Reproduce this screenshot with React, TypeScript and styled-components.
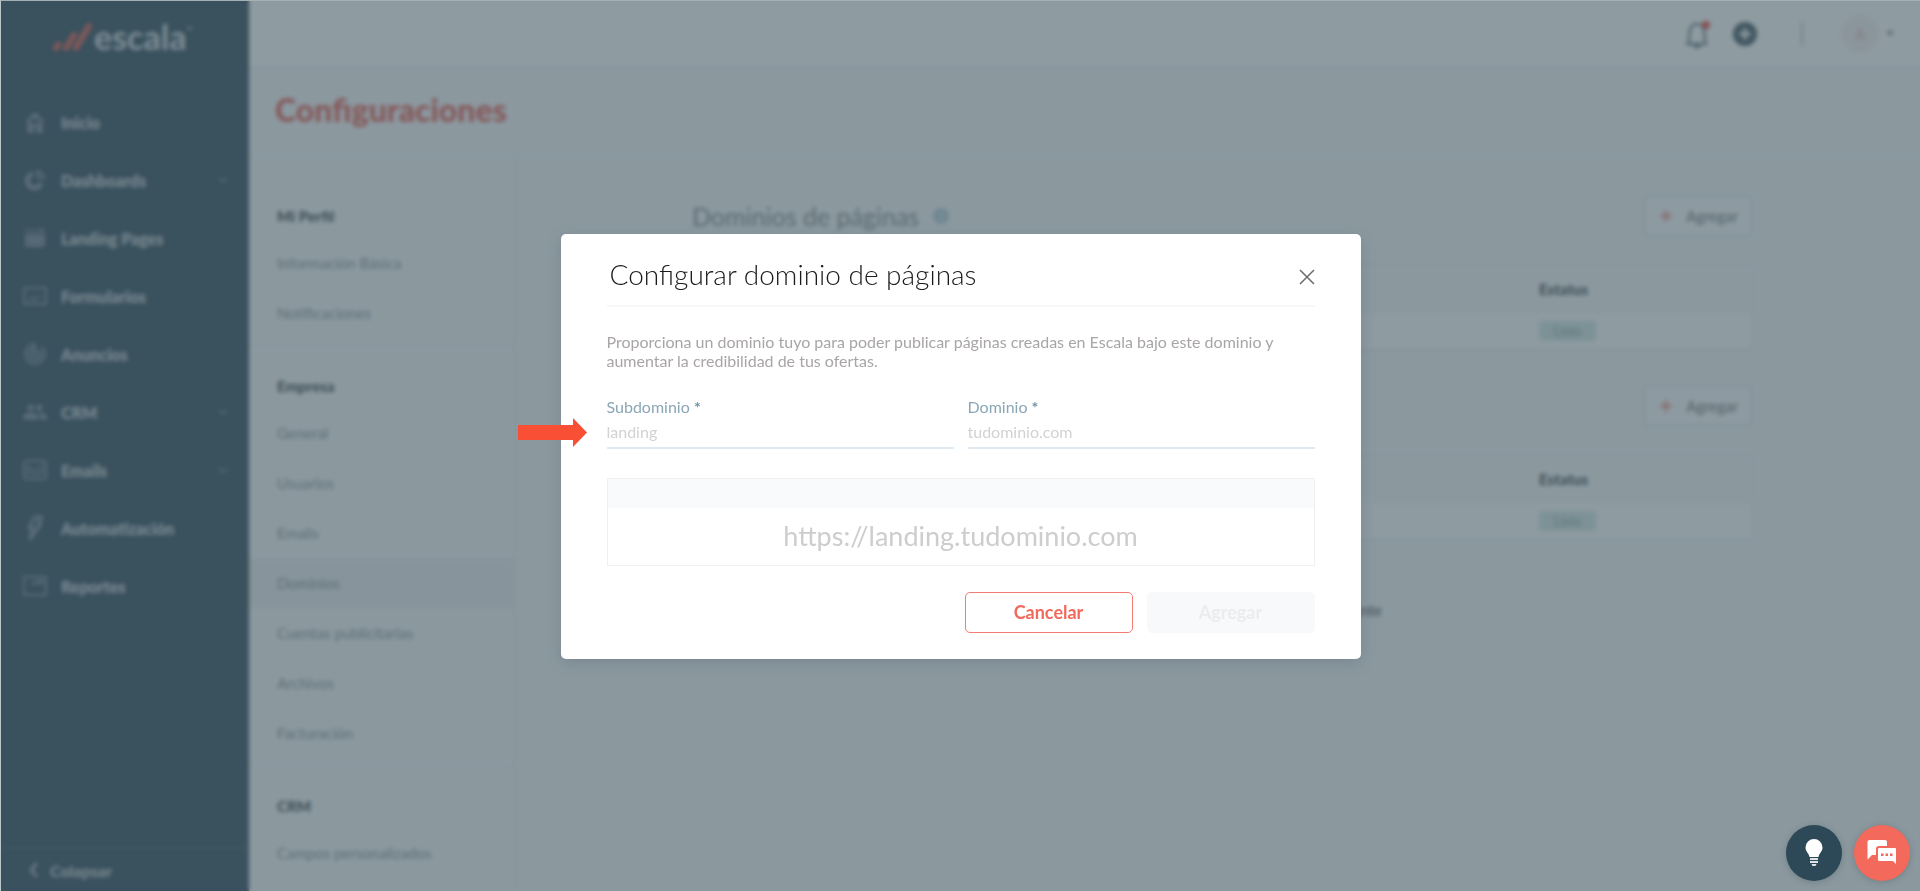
import React from "react";
import styled, { createGlobalStyle, css } from "styled-components";
import { MdGroup, MdTrackChanges } from "react-icons/md";

const GlobalStyle = createGlobalStyle`
  * { box-sizing: border-box; }
  body {
    margin: 0;
    font-family: Lato, "Open Sans", sans-serif;
    font-size: 15px;
    color: #3c3c3c;
    background: #f8f9fb;
  }
  a { color: inherit; text-decoration: none; }
  button, input { font: inherit; }
  h1, h2, h3, p, ul { margin: 0; padding: 0; font-weight: 400; }
  ul { list-style: none; }
`;

const Shell = styled.div`
  display: flex;
  min-height: 100vh;
`;

/* ---------- main sidebar ---------- */

const Sidebar = styled.aside`
  flex: 0 0 249px;
  display: flex;
  flex-direction: column;
  background: #2d4757;
  color: #cfd8dd;
`;

const Brand = styled.a`
  display: flex;
  align-items: center;
  gap: 2px;
  height: 74px;
  margin-bottom: 19px;
  padding-left: 52px;
`;

const BrandName = styled.span`
  display: flex;
  color: #d3dce1;
  font-size: 34px;
  line-height: 30px;
  font-weight: 700;

  sup {
    font-size: 8px;
    line-height: 16px;
  }
`;

const MainLink = styled.a`
  display: flex;
  align-items: center;
  height: 58px;
  padding: 0 20px 0 22px;
  font-size: 16px;
  font-weight: 900;
`;

const IconSlot = styled.span`
  display: flex;
  justify-content: center;
  width: 26px;
  margin-right: 13px;
  opacity: 0.5;
`;

const Caret = styled.svg`
  width: 12px;
  height: 12px;
  margin-left: auto;
  fill: none;
  stroke: currentColor;
  stroke-width: 2;
  opacity: 0.35;
`;

const Collapse = styled.button`
  display: flex;
  align-items: center;
  gap: 10px;
  height: 44px;
  margin-top: auto;
  padding: 0 28px;
  border: 0;
  border-top: 2px solid #3f5867;
  background: none;
  color: inherit;
  font-size: 16px;
  font-weight: 700;
`;

/* ---------- page ---------- */

const Page = styled.div`
  flex: 1;
  min-width: 0;
  display: flex;
  flex-direction: column;
`;

const TopBar = styled.header`
  display: flex;
  align-items: center;
  justify-content: flex-end;
  height: 69px;
  padding-right: 25px;
  background: #ffffff;
  border-bottom: 2px solid #e6eaee;
`;

const IconButton = styled.button<{ $gap: number }>`
  display: flex;
  align-items: center;
  margin-right: ${(p) => p.$gap}px;
  padding: 0;
  border: 0;
  background: none;
  color: #4d606a;
`;

const Separator = styled.span`
  width: 2px;
  height: 24px;
  margin-right: 38px;
  background: #c3cace;
`;

const Account = styled.button`
  display: flex;
  align-items: center;
  gap: 6px;
  padding: 0;
  border: 0;
  background: none;
  color: #7f8a90;
`;

const Avatar = styled.span`
  width: 38px;
  height: 38px;
  border-radius: 50%;
  background: #f8f0f2;
  color: #ecb6ba;
  font-size: 15px;
  line-height: 38px;
  text-align: center;
`;

const PageTitle = styled.h1`
  height: 87px;
  padding: 21px 26px 0;
  border-bottom: 1px solid #eaedf2;
  color: #e8594e;
  font-size: 32px;
  line-height: 40px;
  font-weight: 900;
`;

const Body = styled.div`
  flex: 1;
  display: flex;
`;

const SettingsNav = styled.nav`
  flex: 0 0 267px;
  padding-top: 20px;
  border-right: 2px solid #eaedf5;
`;

const Group = styled.section`
  padding: 20px 0 7px;
  border-bottom: 1px solid #e3e7f0;

  &:last-child { border-bottom: 0; }
`;

const GroupTitle = styled.h3`
  height: 42px;
  padding-left: 28px;
  color: #3c4145;
  font-size: 15px;
  line-height: 40px;
  font-weight: 900;
`;

const SettingsLink = styled.a<{ $active?: boolean }>`
  display: block;
  height: 50px;
  padding-left: 28px;
  color: #868b8f;
  font-size: 15px;
  line-height: 50px;
  ${(p) => p.$active && css`background: #edeef2;`}
`;

const Content = styled.main`
  flex: 1;
  padding: 40px 167px 0 176px;
`;

const Block = styled.section`
  margin-bottom: 35px;
`;

const BlockHead = styled.div`
  display: flex;
  align-items: center;
  gap: 14px;
  height: 40px;
  margin-bottom: 28px;
`;

const BlockTitle = styled.h2`
  color: #7b8185;
  font-size: 25px;
  line-height: 40px;
`;

const Info = styled.span`
  width: 16px;
  height: 16px;
  border-radius: 50%;
  background: #b3cddd;
  color: #ffffff;
  font-size: 11px;
  line-height: 16px;
  text-align: center;
`;

const AddButton = styled.button`
  display: flex;
  align-items: center;
  gap: 13px;
  height: 42px;
  margin-left: auto;
  padding: 0 13px 0 14px;
  border: 2px solid #dfe3ee;
  border-radius: 5px;
  background: #fdfdfe;
  color: #666b6f;
  font-size: 15px;
`;

const DomainTable = styled.table`
  width: 100%;
  border: 1px solid #e3e7ee;
  border-bottom-width: 2px;
  border-collapse: separate;
  border-spacing: 0;

  th, td {
    padding: 0;
    text-align: left;
    line-height: 20px;
  }
  thead th, thead td {
    height: 48px;
    border-bottom: 1px solid #eef0f4;
    color: #3c4145;
    font-weight: 900;
  }
  tbody td {
    height: 36px;
    background: #ffffff;
  }
  th:last-child, td:last-child {
    width: 213px;
  }
`;

const Status = styled.span`
  display: block;
  width: 57px;
  height: 20px;
  border-radius: 4px;
  background: #d4e8e6;
  color: #7d9f9d;
  font-size: 13px;
  text-align: center;
`;

const Note = styled.p`
  max-width: 690px;
  margin-top: 59px;
  line-height: 20px;
  text-align: right;
`;

/* ---------- dialog ---------- */

const Overlay = styled.div`
  position: fixed;
  inset: 0;
  display: flex;
  align-items: center;
  justify-content: center;
  border-top: 1px solid #a3b1b4;
  border-left: 1px solid #bcc7ca;
  background: rgba(67, 89, 99, 0.6);
  backdrop-filter: blur(2px);
`;

const Dialog = styled.div`
  position: relative;
  width: 800px;
  padding: 20px 46px 26px;
  border-radius: 5px;
  background: #ffffff;
  box-shadow: 0 4px 16px rgba(40, 60, 75, 0.2);
`;

const DialogHead = styled.div`
  display: flex;
  align-items: center;
  justify-content: space-between;
  height: 53px;
  padding: 0 0 5px 3px;
  border-bottom: 2px solid #f6f7f7;
`;

const DialogTitle = styled.h2`
  padding-bottom: 5px;
  font-size: 28px;
  line-height: 40px;
  font-weight: 300;
  color: #1a1a1a;
`;

const Close = styled.button`
  display: flex;
  padding: 0;
  border: 0;
  background: none;
  color: #6b6b6b;
`;

const Lead = styled.p`
  margin: 25px 0 27px;
  color: #a9a5a5;
  font-size: 16px;
  line-height: 19px;
`;

const Fields = styled.div`
  display: grid;
  grid-template-columns: 1fr 1fr;
  gap: 14px;
`;

const Field = styled.div`
  display: flex;
  flex-direction: column;

  label {
    color: #8ba7b6;
    font-size: 16px;
    line-height: 20px;
  }
  b { color: #6f93a6; }
  input {
    height: 32px;
    padding: 0;
    border: 0;
    border-bottom: 2px solid #dfeaf2;
    outline: 0;
    background: none;
    font-size: 16px;
  }
  input::placeholder { color: #d2d2d2; opacity: 1; }
`;

const Preview = styled.div`
  margin: 29px 0 26px;
  border: 1px solid #f0f0f1;
  background: #ffffff;
`;

const PreviewBar = styled.div`
  height: 29px;
  background: #f9fafc;
`;

const PreviewUrl = styled.p`
  padding-bottom: 2px;
  color: #cdcdcd;
  font-size: 27px;
  line-height: 55px;
  text-align: center;
`;

const Actions = styled.div`
  display: flex;
  justify-content: flex-end;
  gap: 14px;
`;

const ActionButton = styled.button<{ $primary?: boolean }>`
  width: 168px;
  height: 41px;
  padding-bottom: 2px;
  border: 1px solid ${(p) => (p.$primary ? "#f8f9fb" : "#f37d72")};
  border-radius: 5px;
  background: ${(p) => (p.$primary ? "#f8f9fb" : "#ffffff")};
  color: ${(p) => (p.$primary ? "#ececee" : "#f26a5d")};
  font-size: 18px;
  font-weight: 700;
`;

const Pointer = styled.svg`
  position: absolute;
  top: 184px;
  left: -43px;
  width: 69px;
  height: 29px;
`;

const Floating = styled.div`
  position: fixed;
  right: 10px;
  bottom: 10px;
  display: flex;
  gap: 12px;
`;

const Fab = styled.button<{ $color: string }>`
  display: flex;
  align-items: center;
  justify-content: center;
  width: 56px;
  height: 56px;
  padding: 0;
  border: 0;
  border-radius: 50%;
  background: ${(p) => p.$color};
  box-shadow: 0 1px 6px rgba(30, 50, 60, 0.25);
`;

/* ---------- drawings ---------- */

const Logo = () => (
  <svg width="40" height="30" viewBox="0 0 40 30" stroke="#d9594c" strokeLinecap="round" fill="none">
    <path d="M4 26 6.500 22.500" strokeWidth="6" />
    <path d="M14 26 22 13" strokeWidth="6" />
    <path d="M24 26 37 4" strokeWidth="6" />
  </svg>
);

const HomeIcon = () => (
  <svg width="18" height="22" viewBox="0 0 18 22" fill="none" stroke="currentColor" strokeWidth="3">
    <path d="M1 11l8-8 8 8M3 10v12M15 10v12M9 3v5M6 14h6M6 14v8M12 14v8" />
  </svg>
);

const PieIcon = () => (
  <svg width="22" height="22" viewBox="0 0 22 22" fill="none" stroke="currentColor" strokeWidth="5">
    <path d="M9 5a7 7 0 1 0 8 9" />
    <path d="M13 2a8 8 0 0 1 7 7l-6 0z" strokeWidth="2" />
  </svg>
);

const LandingIcon = () => (
  <svg width="20" height="20" viewBox="0 0 20 20" fill="currentColor">
    <path d="M0 1h4v3H0zM6 1h4v3H6zM12 1h8v3h-8zM0 6h20v13H0z" opacity=".85" />
  </svg>
);

const FormIcon = () => (
  <svg width="24" height="18" viewBox="0 0 24 18" fill="none" stroke="currentColor" strokeWidth="2">
    <rect x="1" y="1" width="22" height="16" />
    <path d="M5 10h14M5 13h10" opacity=".6" />
  </svg>
);

const MailIcon = () => (
  <svg width="24" height="20" viewBox="0 0 24 20" fill="none" stroke="currentColor" strokeWidth="2">
    <rect x="1" y="1" width="22" height="18" rx="3" />
    <path d="M5 6l7 5 7-5M5 14h14M5 6v8M19 6v8" opacity=".8" />
  </svg>
);

const BoltIcon = () => (
  <svg width="18" height="26" viewBox="0 0 18 26" fill="none" stroke="currentColor" strokeWidth="3" strokeLinejoin="round">
    <path d="M9 2h7l-4 7h3L4 24l3-11H3z" />
  </svg>
);

const ReportIcon = () => (
  <svg width="24" height="20" viewBox="0 0 24 20" fill="none" stroke="currentColor" strokeWidth="2">
    <path d="M1 1h22v18H1zM8 9l4-3 2 2 5-4M15 5h4v4" />
  </svg>
);

const BellIcon = () => (
  <svg width="26" height="30" viewBox="0 0 26 30" fill="none" stroke="currentColor" strokeWidth="2">
    <path d="M2 25h21M4 25c2-4 1-8 2-14 1-4 4-6 7-6s6 2 7 6c1 6 0 10 2 14M10 26c1 3 5 3 6 0" />
    <circle cx="22" cy="6" r="4" fill="#ee4438" stroke="none" />
  </svg>
);

const AddIcon = () => (
  <svg width="24" height="24" viewBox="0 0 24 24">
    <circle cx="12" cy="12" r="12" fill="#3f545f" />
    <path d="M12 6v12M6 12h12" stroke="#fff" strokeWidth="3" />
  </svg>
);

const BulbIcon = () => (
  <svg width="18" height="28" viewBox="0 0 18 28" fill="#fff">
    <path d="M9 0a8.500 8.500 0 0 0-8.500 8.500c0 4 3.500 6 4 9.500h9c.5-3.500 4-5.500 4-9.500A8.500 8.500 0 0 0 9 0z" />
    <path d="M5 19h8v2H5zM5 22h8v2H5zM6.500 25h5l-1 2h-3z" opacity=".85" />
  </svg>
);

const ChatIcon = () => (
  <svg width="30" height="28" viewBox="0 0 30 28">
    <path d="M2 1h16a2 2 0 0 1 2 2v11a2 2 0 0 1-2 2H5l-4.500 4.500V3A2 2 0 0 1 2 1z" fill="#fff" />
    <path d="M12 8h16a2 2 0 0 1 2 2v17.500L25.500 23H12a2 2 0 0 1-2-2V10a2 2 0 0 1 2-2z" fill="#fff" stroke="#f3695b" strokeWidth="2" />
    <path d="M14 14.500h2.500V17H14zM18.500 14.500H21V17h-2.500zM23 14.500h2.500V17H23z" fill="#f3695b" />
  </svg>
);

const Chevron = () => (
  <Caret viewBox="0 0 12 12"><path d="M2 4l4 4 4-4" /></Caret>
);

/* ---------- data ---------- */

const mainLinks: { label: string; icon: React.ReactNode; menu?: boolean }[] = [
  { label: "Inicio", icon: <HomeIcon /> },
  { label: "Dashboards", icon: <PieIcon />, menu: true },
  { label: "Landing Pages", icon: <LandingIcon /> },
  { label: "Formularios", icon: <FormIcon /> },
  { label: "Anuncios", icon: <MdTrackChanges size={28} /> },
  { label: "CRM", icon: <MdGroup size={28} />, menu: true },
  { label: "Emails", icon: <MailIcon />, menu: true },
  { label: "Automatización", icon: <BoltIcon /> },
  { label: "Reportes", icon: <ReportIcon /> },
];

const groups = [
  { title: "Mi Perfil", links: ["Información Básica", "Notificaciones"] },
  {
    title: "Empresa",
    links: ["General", "Usuarios", "Emails", "Dominios", "Cuentas publicitarias", "Archivos", "Facturación"],
  },
  { title: "CRM", links: ["Campos personalizados"] },
];

const DomainBlock = ({ title }: { title?: string }) => (
  <Block>
    <BlockHead>
      {title && <BlockTitle>{title}</BlockTitle>}
      {title && <Info>i</Info>}
      <AddButton type="button">
        <svg width="14" height="14" viewBox="0 0 14 14" stroke="#e87a70" strokeWidth="2">
          <path d="M7 1v12M1 7h12" />
        </svg>
        Agregar
      </AddButton>
    </BlockHead>
    <DomainTable>
      <thead>
        <tr><td /><th>Estatus</th></tr>
      </thead>
      <tbody>
        <tr><td /><td><Status>Listo</Status></td></tr>
      </tbody>
    </DomainTable>
  </Block>
);

export default function App() {
  return (
    <>
      <GlobalStyle />
      <Shell>
        <Sidebar>
          <Brand href="#">
            <Logo />
            <BrandName>escala<sup>™</sup></BrandName>
          </Brand>
          <nav>
            {mainLinks.map((link) => (
              <MainLink href="#" key={link.label}>
                <IconSlot>{link.icon}</IconSlot>
                {link.label}
                {link.menu && <Chevron />}
              </MainLink>
            ))}
          </nav>
          <Collapse type="button">
            <svg width="12" height="16" viewBox="0 0 12 16" fill="none" stroke="currentColor" strokeWidth="2">
              <path d="M9 1L3 8l6 7" />
            </svg>
            Colapsar
          </Collapse>
        </Sidebar>
        <Page>
          <TopBar>
            <IconButton type="button" aria-label="Notificaciones" $gap={23}><BellIcon /></IconButton>
            <IconButton type="button" aria-label="Crear" $gap={44}><AddIcon /></IconButton>
            <Separator />
            <Account type="button" aria-label="Cuenta">
              <Avatar>A</Avatar>
              <svg width="10" height="6" viewBox="0 0 10 6" fill="currentColor"><path d="M1 0h8L5 5z" /></svg>
            </Account>
          </TopBar>
          <PageTitle>Configuraciones</PageTitle>
          <Body>
            <SettingsNav>
              {groups.map((group) => (
                <Group key={group.title}>
                  <GroupTitle>{group.title}</GroupTitle>
                  <ul>
                    {group.links.map((label) => (
                      <li key={label}>
                        <SettingsLink href="#" $active={label === "Dominios"}>{label}</SettingsLink>
                      </li>
                    ))}
                  </ul>
                </Group>
              ))}
            </SettingsNav>
            <Content>
              <DomainBlock title="Dominios de páginas" />
              <DomainBlock />
              <Note>siguiente</Note>
            </Content>
          </Body>
        </Page>
      </Shell>
      <Overlay>
        <Dialog role="dialog" aria-modal="true" aria-labelledby="dialog-title">
          <DialogHead>
            <DialogTitle id="dialog-title">Configurar dominio de páginas</DialogTitle>
            <Close type="button" aria-label="Cerrar">
              <svg width="16" height="16" viewBox="0 0 16 16" stroke="currentColor" strokeWidth="1.500">
                <path d="M1 1l14 14M15 1L1 15" />
              </svg>
            </Close>
          </DialogHead>
          <Lead>
            Proporciona un dominio tuyo para poder publicar páginas creadas en Escala bajo este dominio y
            aumentar la credibilidad de tus ofertas.
          </Lead>
          <Fields>
            <Field>
              <label htmlFor="subdomain">Subdominio <b>*</b></label>
              <input id="subdomain" type="text" placeholder="landing" />
            </Field>
            <Field>
              <label htmlFor="domain">Dominio <b>*</b></label>
              <input id="domain" type="text" placeholder="tudominio.com" />
            </Field>
          </Fields>
          <Preview>
            <PreviewBar />
            <PreviewUrl>https://landing.tudominio.com</PreviewUrl>
          </Preview>
          <Actions>
            <ActionButton type="button">Cancelar</ActionButton>
            <ActionButton type="button" $primary disabled>Agregar</ActionButton>
          </Actions>
          <Pointer viewBox="0 0 69 29" fill="#f84f35">
            <path d="M0 7h55V0l14 14.500L55 29v-7H0z" />
          </Pointer>
        </Dialog>
      </Overlay>
      <Floating>
        <Fab type="button" aria-label="Sugerencias" $color="#2d4857"><BulbIcon /></Fab>
        <Fab type="button" aria-label="Chat" $color="#f3695b"><ChatIcon /></Fab>
      </Floating>
    </>
  );
}
